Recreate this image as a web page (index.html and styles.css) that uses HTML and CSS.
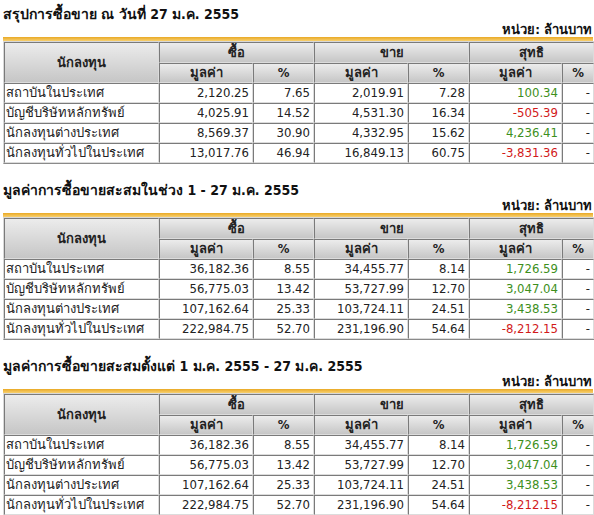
FILE: index.html
```html
<!DOCTYPE html>
<html lang="th">
<head>
<meta charset="utf-8">
<title>สรุปการซื้อขาย</title>
<link rel="stylesheet" href="styles.css">
</head>
<body>
<div class="page">

<section class="block">
  <h2 class="title">สรุปการซื้อขาย ณ วันที่ 27 ม.ค. 2555</h2>
  <div class="unit">หน่วย: ล้านบาท</div>
  <div class="bar"></div>
  <table class="grid">
    <colgroup><col class="c1"><col class="c2"><col class="c3"><col class="c2"><col class="c3"><col class="c6"><col class="c7"></colgroup>
    <thead>
      <tr class="h1"><th rowspan="2">นักลงทุน</th><th colspan="2">ซื้อ</th><th colspan="2">ขาย</th><th colspan="2">สุทธิ</th></tr>
      <tr class="h2"><th>มูลค่า</th><th>%</th><th>มูลค่า</th><th>%</th><th>มูลค่า</th><th>%</th></tr>
    </thead>
    <tbody>
      <tr><td class="name">สถาบันในประเทศ</td><td>2,120.25</td><td>7.65</td><td>2,019.91</td><td>7.28</td><td class="pos">100.34</td><td>-</td></tr>
      <tr><td class="name">บัญชีบริษัทหลักทรัพย์</td><td>4,025.91</td><td>14.52</td><td>4,531.30</td><td>16.34</td><td class="neg">-505.39</td><td>-</td></tr>
      <tr><td class="name">นักลงทุนต่างประเทศ</td><td>8,569.37</td><td>30.90</td><td>4,332.95</td><td>15.62</td><td class="pos">4,236.41</td><td>-</td></tr>
      <tr><td class="name">นักลงทุนทั่วไปในประเทศ</td><td>13,017.76</td><td>46.94</td><td>16,849.13</td><td>60.75</td><td class="neg">-3,831.36</td><td>-</td></tr>
    </tbody>
  </table>
</section>

<section class="block">
  <h2 class="title">มูลค่าการซื้อขายสะสมในช่วง 1 - 27 ม.ค. 2555</h2>
  <div class="unit">หน่วย: ล้านบาท</div>
  <div class="bar"></div>
  <table class="grid">
    <colgroup><col class="c1"><col class="c2"><col class="c3"><col class="c2"><col class="c3"><col class="c6"><col class="c7"></colgroup>
    <thead>
      <tr class="h1"><th rowspan="2">นักลงทุน</th><th colspan="2">ซื้อ</th><th colspan="2">ขาย</th><th colspan="2">สุทธิ</th></tr>
      <tr class="h2"><th>มูลค่า</th><th>%</th><th>มูลค่า</th><th>%</th><th>มูลค่า</th><th>%</th></tr>
    </thead>
    <tbody>
      <tr><td class="name">สถาบันในประเทศ</td><td>36,182.36</td><td>8.55</td><td>34,455.77</td><td>8.14</td><td class="pos">1,726.59</td><td>-</td></tr>
      <tr><td class="name">บัญชีบริษัทหลักทรัพย์</td><td>56,775.03</td><td>13.42</td><td>53,727.99</td><td>12.70</td><td class="pos">3,047.04</td><td>-</td></tr>
      <tr><td class="name">นักลงทุนต่างประเทศ</td><td>107,162.64</td><td>25.33</td><td>103,724.11</td><td>24.51</td><td class="pos">3,438.53</td><td>-</td></tr>
      <tr><td class="name">นักลงทุนทั่วไปในประเทศ</td><td>222,984.75</td><td>52.70</td><td>231,196.90</td><td>54.64</td><td class="neg">-8,212.15</td><td>-</td></tr>
    </tbody>
  </table>
</section>

<section class="block">
  <h2 class="title">มูลค่าการซื้อขายสะสมตั้งแต่ 1 ม.ค. 2555 - 27 ม.ค. 2555</h2>
  <div class="unit">หน่วย: ล้านบาท</div>
  <div class="bar"></div>
  <table class="grid">
    <colgroup><col class="c1"><col class="c2"><col class="c3"><col class="c2"><col class="c3"><col class="c6"><col class="c7"></colgroup>
    <thead>
      <tr class="h1"><th rowspan="2">นักลงทุน</th><th colspan="2">ซื้อ</th><th colspan="2">ขาย</th><th colspan="2">สุทธิ</th></tr>
      <tr class="h2"><th>มูลค่า</th><th>%</th><th>มูลค่า</th><th>%</th><th>มูลค่า</th><th>%</th></tr>
    </thead>
    <tbody>
      <tr><td class="name">สถาบันในประเทศ</td><td>36,182.36</td><td>8.55</td><td>34,455.77</td><td>8.14</td><td class="pos">1,726.59</td><td>-</td></tr>
      <tr><td class="name">บัญชีบริษัทหลักทรัพย์</td><td>56,775.03</td><td>13.42</td><td>53,727.99</td><td>12.70</td><td class="pos">3,047.04</td><td>-</td></tr>
      <tr><td class="name">นักลงทุนต่างประเทศ</td><td>107,162.64</td><td>25.33</td><td>103,724.11</td><td>24.51</td><td class="pos">3,438.53</td><td>-</td></tr>
      <tr><td class="name">นักลงทุนทั่วไปในประเทศ</td><td>222,984.75</td><td>52.70</td><td>231,196.90</td><td>54.64</td><td class="neg">-8,212.15</td><td>-</td></tr>
    </tbody>
  </table>
</section>

</div>
</body>
</html>
```

FILE: styles.css
```css
* { box-sizing: border-box; }
html, body { margin: 0; padding: 0; background: #ffffff; }
body {
  font-family: Tahoma, "DejaVu Sans Condensed", "DejaVu Sans", sans-serif;
  font-size: 13px;
  color: #222;
}
.page { width: 594px; padding: 0 1px 0 3px; }
.block { padding-top: 5px; padding-bottom: 12px; }
.title {
  margin: 0;
  font-size: 14px;
  font-weight: bold;
  line-height: 18px;
  height: 18px;
  color: #111;
}
.unit {
  text-align: right;
  font-weight: bold;
  font-size: 13px;
  line-height: 14px;
  height: 14px;
  color: #111;
  padding-right: 1px;
}
.bar {
  height: 4px;
  background: linear-gradient(#e9a925, #f7d070);
}
.grid {
  width: 590px;
  border-collapse: separate;
  border-spacing: 0;
  table-layout: fixed;
  border: 1px solid;
  border-color: #d8d8d8 #8a8a8a #8a8a8a #d8d8d8;
}
.c1 { width: 155px; }
.c2 { width: 94px; }
.c3 { width: 61px; }
.c6 { width: 93px; }
.c7 { width: 32px; }
.grid th, .grid td {
  border: 1px solid;
  border-color: #7a7a7a #dcdcdc #dcdcdc #7a7a7a;
  padding: 0 3px;
  white-space: nowrap;
  overflow: hidden;
}
.grid th {
  background: linear-gradient(#ececec, #c6c6c6);
  font-weight: bold;
  text-align: center;
  color: #222;
}
.h1 th { height: 21px; line-height: 19px; }
.h2 th { height: 20px; line-height: 18px; }
.grid td {
  height: 20px;
  line-height: 18px;
  text-align: right;
  background: #fff;
}
.grid td.name { text-align: left; padding-left: 1px; }
.grid td.pos { color: #3d8f1c; }
.grid td.neg { color: #d21a1a; }
```
